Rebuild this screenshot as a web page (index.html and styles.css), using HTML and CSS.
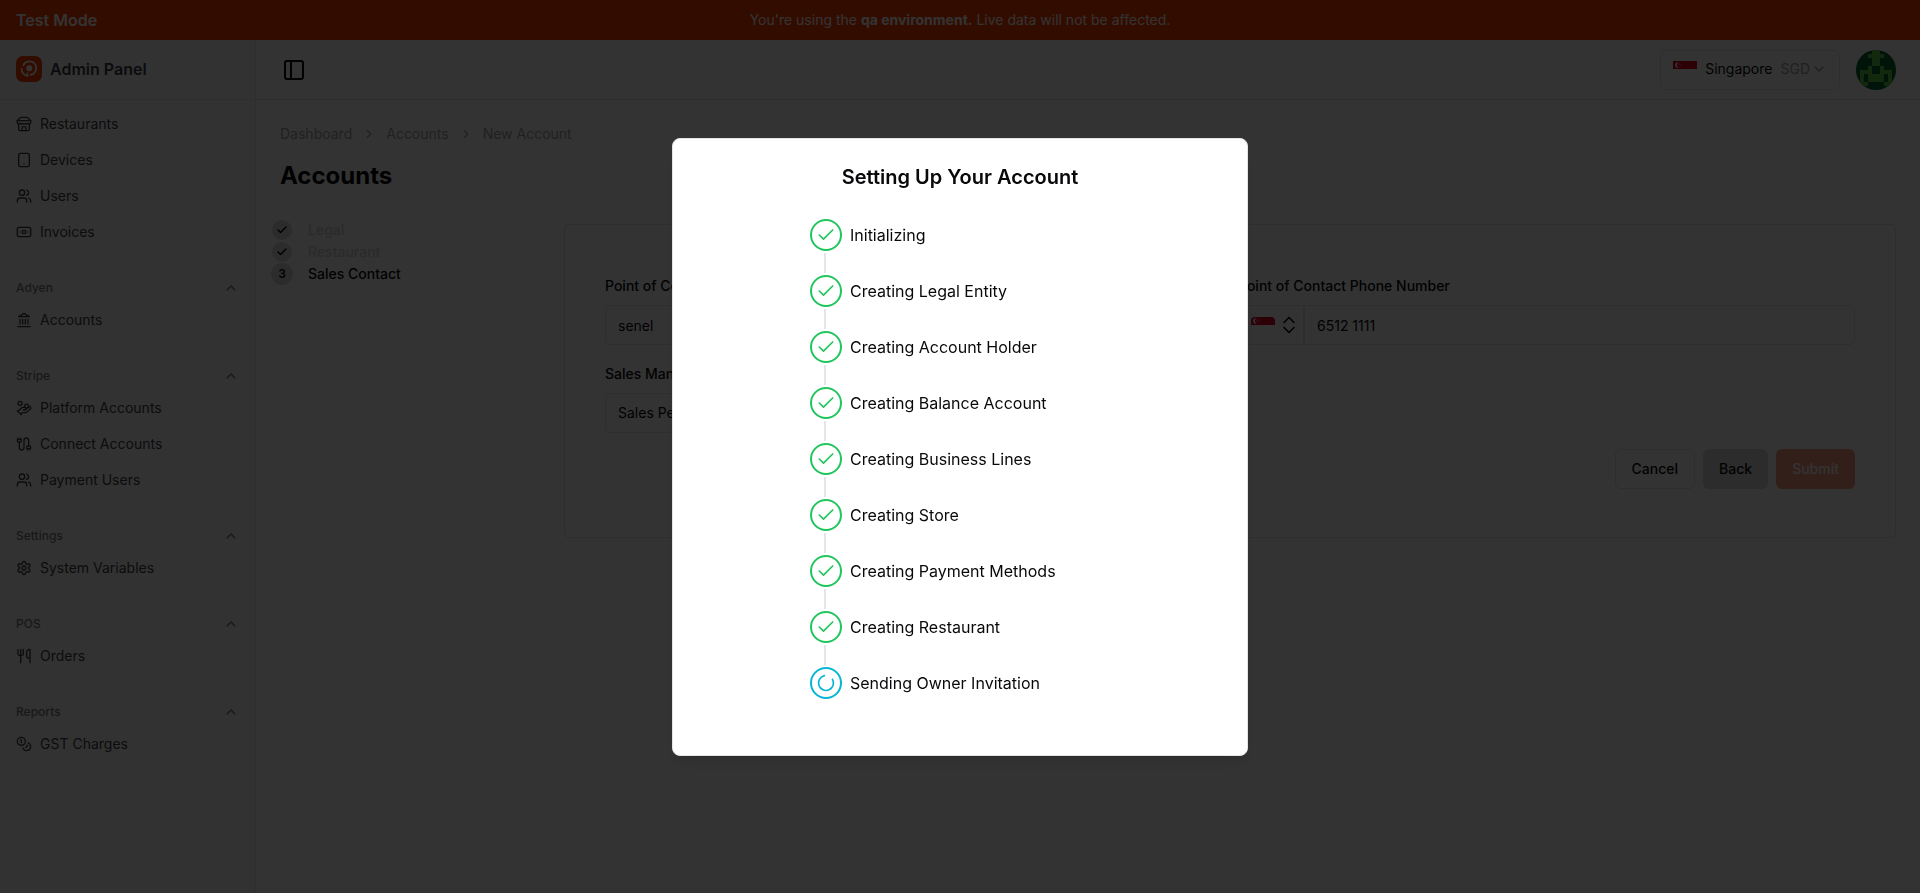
FILE: index.html
```html
<!DOCTYPE html>
<html lang="en">
<head>
<meta charset="utf-8">
<meta name="viewport" content="width=device-width, initial-scale=1">
<title>Admin Panel - New Account</title>
<link rel="stylesheet" href="styles.css">
</head>
<body>
<svg class="sprite" aria-hidden="true">
  <symbol id="i-store" viewBox="0 0 24 24"><path d="m2 7 4.41-4.41A2 2 0 0 1 7.83 2h8.34a2 2 0 0 1 1.42.59L22 7"/><path d="M4 12v8a2 2 0 0 0 2 2h12a2 2 0 0 0 2-2v-8"/><path d="M15 22v-4a2 2 0 0 0-2-2h-2a2 2 0 0 0-2 2v4"/><path d="M2 7h20"/><path d="M22 7v3a2 2 0 0 1-2 2a2.7 2.7 0 0 1-1.59-.63.7.7 0 0 0-.82 0A2.7 2.7 0 0 1 16 12a2.7 2.7 0 0 1-1.59-.63.7.7 0 0 0-.82 0A2.7 2.7 0 0 1 12 12a2.7 2.7 0 0 1-1.59-.63.7.7 0 0 0-.82 0A2.7 2.7 0 0 1 8 12a2.7 2.7 0 0 1-1.59-.63.7.7 0 0 0-.82 0A2.7 2.7 0 0 1 4 12a2 2 0 0 1-2-2V7"/></symbol>
  <symbol id="i-tablet" viewBox="0 0 24 24"><rect x="4" y="2" width="16" height="20" rx="2"/><path d="M12 18h.01"/></symbol>
  <symbol id="i-users" viewBox="0 0 24 24"><path d="M16 21v-2a4 4 0 0 0-4-4H6a4 4 0 0 0-4 4v2"/><circle cx="9" cy="7" r="4"/><path d="M22 21v-2a4 4 0 0 0-3-3.87"/><path d="M16 3.13a4 4 0 0 1 0 7.75"/></symbol>
  <symbol id="i-banknote" viewBox="0 0 24 24"><rect x="2" y="5" width="20" height="14" rx="2"/><circle cx="12" cy="12" r="2.5"/><path d="M6 12h.01M18 12h.01"/></symbol>
  <symbol id="i-landmark" viewBox="0 0 24 24"><path d="M3 22h18M6 18v-7M10 18v-7M14 18v-7M18 18v-7"/><path d="m12 2 8 5H4z"/></symbol>
  <symbol id="i-hand-coins" viewBox="0 0 24 24"><path d="M11 15h2a2 2 0 1 0 0-4h-3c-.6 0-1.1.2-1.4.6L3 17"/><path d="m7 21 1.6-1.4c.3-.4.8-.6 1.4-.6h4c1.1 0 2.1-.4 2.8-1.2l4.6-4.4a2 2 0 0 0-2.75-2.91l-4.2 3.9"/><path d="m2 16 6 6"/><circle cx="16" cy="9" r="2.9"/><circle cx="6" cy="5" r="3"/></symbol>
  <symbol id="i-cable" viewBox="0 0 24 24"><path d="M17 21v-2a1 1 0 0 1-1-1v-1a2 2 0 0 1 2-2h2a2 2 0 0 1 2 2v1a1 1 0 0 1-1 1v2"/><path d="M19 15V6.5a3.5 3.5 0 0 0-7 0v11a3.5 3.5 0 0 1-7 0V9"/><path d="M21 19h-4M3 5h4V3"/><path d="M7 5a1 1 0 0 1 1 1v1a2 2 0 0 1-2 2H4a2 2 0 0 1-2-2V6a1 1 0 0 1 1-1V3"/></symbol>
  <symbol id="i-settings" viewBox="0 0 24 24"><path d="M12.22 2h-.44a2 2 0 0 0-2 2v.18a2 2 0 0 1-1 1.73l-.43.25a2 2 0 0 1-2 0l-.15-.08a2 2 0 0 0-2.73.73l-.22.38a2 2 0 0 0 .73 2.73l.15.1a2 2 0 0 1 1 1.72v.51a2 2 0 0 1-1 1.74l-.15.09a2 2 0 0 0-.73 2.73l.22.38a2 2 0 0 0 2.73.73l.15-.08a2 2 0 0 1 2 0l.43.25a2 2 0 0 1 1 1.73V20a2 2 0 0 0 2 2h.44a2 2 0 0 0 2-2v-.18a2 2 0 0 1 1-1.73l.43-.25a2 2 0 0 1 2 0l.15.08a2 2 0 0 0 2.73-.73l.22-.39a2 2 0 0 0-.73-2.73l-.15-.08a2 2 0 0 1-1-1.74v-.5a2 2 0 0 1 1-1.74l.15-.09a2 2 0 0 0 .73-2.73l-.22-.38a2 2 0 0 0-2.73-.73l-.15.08a2 2 0 0 1-2 0l-.43-.25a2 2 0 0 1-1-1.73V4a2 2 0 0 0-2-2z"/><circle cx="12" cy="12" r="3"/></symbol>
  <symbol id="i-utensils" viewBox="0 0 24 24"><path d="M3 2v7c0 1.1.9 2 2 2h4a2 2 0 0 0 2-2V2"/><path d="M7 2v20"/><path d="M21 15V2a5 5 0 0 0-5 5v6c0 1.1.9 2 2 2h3Zm0 0v7"/></symbol>
  <symbol id="i-coins" viewBox="0 0 24 24"><circle cx="8" cy="8" r="6"/><path d="M18.09 10.37A6 6 0 1 1 10.34 18"/><path d="M7 6h1v4"/><path d="m16.71 13.88.7.71-2.82 2.82"/></symbol>
  <symbol id="i-up" viewBox="0 0 24 24"><path d="m18 15-6-6-6 6"/></symbol>
  <symbol id="i-down" viewBox="0 0 24 24"><path d="m6 9 6 6 6-6"/></symbol>
  <symbol id="i-right" viewBox="0 0 24 24"><path d="m9 18 6-6-6-6"/></symbol>
  <symbol id="i-updown" viewBox="0 0 24 24"><path d="m6 9 6-6 6 6M6 15l6 6 6-6"/></symbol>
  <symbol id="i-panel" viewBox="0 0 24 24"><rect x="3" y="3" width="18" height="18" rx="2"/><path d="M9 3v18"/></symbol>
  <symbol id="i-check" viewBox="0 0 24 24"><path d="M20 6 9 17l-5-5"/></symbol>
  <symbol id="i-loader" viewBox="0 0 24 24"><path transform="rotate(-30 12 12)" d="M21 12a9 9 0 1 1-6.219-8.56"/></symbol>
  <symbol id="i-flag" viewBox="0 0 24 16"><path fill="#fff" d="M0 0h24v16H0z"/><path fill="#df0029" d="M0 0h24v8H0z"/><path fill="#fff" d="M5.500 1.400a2.700 2.700 0 1 0 0 5.200 2.900 2.900 0 0 1 0-5.200z"/><g fill="#fff"><circle cx="6.900" cy="2.500" r=".45"/><circle cx="5.800" cy="3.500" r=".45"/><circle cx="8" cy="3.500" r=".45"/><circle cx="6.200" cy="4.900" r=".45"/><circle cx="7.600" cy="4.900" r=".45"/></g></symbol>
</svg>

<div class="app">
  <div class="banner">
    <strong class="banner-mode">Test Mode</strong>
    <p class="banner-text">You're using the <strong>qa environment.</strong> Live data will not be affected.</p>
  </div>

  <div class="shell">
    <aside class="sidebar">
      <div class="brand">
        <svg class="brand-logo" viewBox="0 0 26 26" aria-hidden="true"><rect width="26" height="26" rx="7" fill="#ff3c00"/><g fill="none" stroke="#fff" stroke-width="1.700" stroke-linecap="round"><path d="M7.300 9.300A6.800 6.800 0 1 1 14.500 18.900"/><path d="M5.600 12.800a7.600 7.600 0 0 0 5.800 7.200v-2.600"/></g><circle cx="13.300" cy="12.200" r="3" fill="#fff"/></svg>
        <span class="brand-name">Admin Panel</span>
      </div>
      <nav class="nav">
        <div class="nav-group">
          <a class="nav-item" href="#"><svg class="icon"><use href="#i-store"/></svg>Restaurants</a>
          <a class="nav-item" href="#"><svg class="icon"><use href="#i-tablet"/></svg>Devices</a>
          <a class="nav-item" href="#"><svg class="icon"><use href="#i-users"/></svg>Users</a>
          <a class="nav-item" href="#"><svg class="icon"><use href="#i-banknote"/></svg>Invoices</a>
        </div>
        <div class="nav-group">
          <button class="nav-label" type="button">Adyen<svg class="icon"><use href="#i-up"/></svg></button>
          <a class="nav-item" href="#"><svg class="icon"><use href="#i-landmark"/></svg>Accounts</a>
        </div>
        <div class="nav-group">
          <button class="nav-label" type="button">Stripe<svg class="icon"><use href="#i-up"/></svg></button>
          <a class="nav-item" href="#"><svg class="icon"><use href="#i-hand-coins"/></svg>Platform Accounts</a>
          <a class="nav-item" href="#"><svg class="icon"><use href="#i-cable"/></svg>Connect Accounts</a>
          <a class="nav-item" href="#"><svg class="icon"><use href="#i-users"/></svg>Payment Users</a>
        </div>
        <div class="nav-group">
          <button class="nav-label" type="button">Settings<svg class="icon"><use href="#i-up"/></svg></button>
          <a class="nav-item" href="#"><svg class="icon"><use href="#i-settings"/></svg>System Variables</a>
        </div>
        <div class="nav-group">
          <button class="nav-label" type="button">POS<svg class="icon"><use href="#i-up"/></svg></button>
          <a class="nav-item" href="#"><svg class="icon"><use href="#i-utensils"/></svg>Orders</a>
        </div>
        <div class="nav-group">
          <button class="nav-label" type="button">Reports<svg class="icon"><use href="#i-up"/></svg></button>
          <a class="nav-item" href="#"><svg class="icon"><use href="#i-coins"/></svg>GST Charges</a>
        </div>
      </nav>
    </aside>

    <div class="content">
      <header class="topbar">
        <button class="panel-toggle" type="button" aria-label="Toggle sidebar"><svg class="icon icon-lg"><use href="#i-panel"/></svg></button>
        <div class="topbar-end">
          <button class="country" type="button">
            <svg class="flag"><use href="#i-flag"/></svg>
            <span>Singapore</span>
            <span class="currency">SGD<svg class="icon"><use href="#i-down"/></svg></span>
          </button>
          <svg class="avatar" viewBox="0 0 10 10" role="img" aria-label="Profile" shape-rendering="crispEdges"><path fill="#00672e" d="M0 0h10v10H0z"/><path fill="#63c748" d="M4 0h2v1h1v1H6v2h1v1h2v4H7V8h1V6H7v2H3V6H2v2h1v1H1V5h2V4h1V2H3V1h1zM4 4h2v2H4z" fill-rule="evenodd"/></svg>
        </div>
      </header>

      <main class="page">
        <nav class="crumbs" aria-label="Breadcrumb">
          <a href="#">Dashboard</a>
          <svg class="icon icon-sm"><use href="#i-right"/></svg>
          <a href="#">Accounts</a>
          <svg class="icon icon-sm"><use href="#i-right"/></svg>
          <a href="#">New Account</a>
        </nav>
        <h1 class="title">Accounts</h1>

        <div class="columns">
          <ol class="steps">
            <li class="step step-done"><span class="dot"><svg class="icon icon-xs"><use href="#i-check"/></svg></span>Legal</li>
            <li class="step step-done"><span class="dot"><svg class="icon icon-xs"><use href="#i-check"/></svg></span>Restaurant</li>
            <li class="step"><span class="dot dot-current">3</span>Sales Contact</li>
          </ol>

          <form class="card">
            <div class="fields">
              <div class="field">
                <label for="poc-name">Point of Contact Name</label>
                <input class="control" id="poc-name" type="text" value="senel">
              </div>
              <div class="field">
                <label for="poc-phone">Point of Contact Phone Number</label>
                <div class="phone">
                  <button class="dial" type="button" aria-label="Country code"><svg class="flag flag-round"><use href="#i-flag"/></svg><svg class="icon icon-md"><use href="#i-updown"/></svg></button>
                  <input class="control phone-number" id="poc-phone" type="tel" value="6512 1111">
                </div>
              </div>
              <div class="field">
                <label for="manager">Sales Manager</label>
                <select class="control" id="manager"><option>Sales Person</option></select>
              </div>
            </div>
            <div class="actions">
              <button class="btn btn-outline" type="button">Cancel</button>
              <button class="btn btn-muted" type="button">Back</button>
              <button class="btn btn-primary" type="submit">Submit</button>
            </div>
          </form>
        </div>
      </main>
    </div>
  </div>
</div>

<div class="overlay">
  <section class="dialog" role="dialog" aria-modal="true" aria-labelledby="dialog-title">
    <h2 class="dialog-title" id="dialog-title">Setting Up Your Account</h2>
    <ol class="progress">
      <li class="task"><span class="ring"><svg class="icon icon-md"><use href="#i-check"/></svg></span>Initializing</li>
      <li class="task"><span class="ring"><svg class="icon icon-md"><use href="#i-check"/></svg></span>Creating Legal Entity</li>
      <li class="task"><span class="ring"><svg class="icon icon-md"><use href="#i-check"/></svg></span>Creating Account Holder</li>
      <li class="task"><span class="ring"><svg class="icon icon-md"><use href="#i-check"/></svg></span>Creating Balance Account</li>
      <li class="task"><span class="ring"><svg class="icon icon-md"><use href="#i-check"/></svg></span>Creating Business Lines</li>
      <li class="task"><span class="ring"><svg class="icon icon-md"><use href="#i-check"/></svg></span>Creating Store</li>
      <li class="task"><span class="ring"><svg class="icon icon-md"><use href="#i-check"/></svg></span>Creating Payment Methods</li>
      <li class="task"><span class="ring"><svg class="icon icon-md"><use href="#i-check"/></svg></span>Creating Restaurant</li>
      <li class="task task-active"><span class="ring"><svg class="icon icon-md"><use href="#i-loader"/></svg></span>Sending Owner Invitation</li>
    </ol>
  </section>
</div>
</body>
</html>
```
FILE: styles.css
```css
:root {
  --line: #e4e4e7;
  --ink: #09090b;
  --brand: #ff3c00;
}

*, *::before, *::after { box-sizing: border-box; }

body {
  margin: 0;
  background: #fff;
  color: var(--ink);
  font: 400 14px/20px Inter, "Liberation Sans", sans-serif;
}

h1, h2, p, ol { margin: 0; padding: 0; }
ol { list-style: none; }
a { color: inherit; text-decoration: none; }

button, input, select {
  margin: 0;
  color: inherit;
  font: inherit;
}

button {
  padding: 0;
  border: 0;
  background: none;
}

.sprite { display: none; }

.icon {
  display: block;
  flex: none;
  width: 16px;
  height: 16px;
  fill: none;
  stroke: currentColor;
  stroke-width: 2;
  stroke-linecap: round;
  stroke-linejoin: round;
}
.icon-xs { width: 12px; height: 12px; stroke-width: 3; }
.icon-sm { width: 14px; height: 14px; }
.icon-md { width: 20px; height: 20px; }
.icon-lg { width: 24px; height: 24px; }

.app {
  display: flex;
  flex-direction: column;
  min-height: 100vh;
}

/* Environment banner */
.banner {
  display: grid;
  grid-template-columns: 1fr auto 1fr;
  align-items: center;
  height: 40px;
  padding: 0 16px;
  background: var(--brand);
  color: #fff;
}
.banner-mode { font-size: 16px; font-weight: 600; }

.shell {
  display: flex;
  flex: 1;
}

/* Sidebar */
.sidebar {
  flex: none;
  width: 256px;
  border-right: 1px solid var(--line);
  background: #fafafa;
  color: #3f3f46;
}
.brand {
  display: flex;
  align-items: center;
  gap: 8px;
  height: 60px;
  padding: 0 16px 1px;
  border-bottom: 1px solid var(--line);
}
.brand-logo { width: 26px; height: 26px; }
.brand-name { font-size: 16px; font-weight: 600; }

.nav {
  display: flex;
  flex-direction: column;
  gap: 24px;
  padding: 6px 16px;
}
.nav-group { display: flex; flex-direction: column; }
.nav-item {
  display: flex;
  align-items: center;
  gap: 8px;
  height: 36px;
}
.nav-label {
  display: flex;
  align-items: center;
  justify-content: space-between;
  height: 28px;
  color: #7b7b80;
  font-size: 12px;
  font-weight: 500;
}

/* Top bar */
.content { flex: 1; min-width: 0; }
.topbar {
  display: flex;
  align-items: center;
  justify-content: space-between;
  height: 60px;
  padding: 0 24px 0 26px;
  border-bottom: 1px solid var(--line);
}
.topbar-end {
  display: flex;
  align-items: center;
  gap: 16px;
}
.country {
  display: flex;
  align-items: center;
  gap: 8px;
  height: 40px;
  padding: 0 12px 2px;
  border: 1px solid var(--line);
  border-radius: 6px;
}
.currency {
  display: flex;
  align-items: center;
  gap: 1px;
  color: #a1a1aa;
}
.flag { display: block; width: 24px; height: 16px; }
.flag-round { border-radius: 4px; }
.avatar { width: 40px; height: 40px; border-radius: 50%; }

/* Page */
.page { padding: 24px; }
.crumbs {
  display: flex;
  align-items: center;
  gap: 10px;
  color: #a1a1aa;
}
.title {
  margin-top: 16px;
  font-size: 24px;
  font-weight: 700;
  line-height: 32px;
}
.columns {
  display: grid;
  grid-template-columns: 260px 1fr;
  gap: 24px;
  align-items: start;
  margin-top: 27px;
}

.step {
  display: grid;
  grid-template-columns: 20px 1fr;
  align-items: center;
  gap: 16px;
  height: 22px;
  margin-left: -8px;
  font-weight: 500;
}
.step-done { color: #d0d0d4; }
.dot {
  display: flex;
  align-items: center;
  justify-content: center;
  justify-self: center;
  width: 20px;
  height: 20px;
  border-radius: 50%;
  background: #dcdcde;
  color: var(--ink);
}
.dot-current { width: 22px; height: 22px; font-size: 12px; font-weight: 600; }

/* Form card */
.card {
  margin-top: 5px;
  padding: 50px 40px 48px;
  border: 1px solid var(--line);
  border-radius: 4px;
}
.fields {
  display: grid;
  grid-template-columns: 1fr 1fr;
  gap: 18px 16px;
}
.field {
  display: flex;
  flex-direction: column;
  gap: 8px;
}
.field label { font-weight: 500; line-height: 22px; }
.control {
  width: 100%;
  height: 40px;
  padding: 0 12px;
  border: 1px solid var(--line);
  border-radius: 6px;
  background: #fff;
  appearance: none;
}
.phone { display: flex; }
.dial {
  display: flex;
  flex: none;
  align-items: center;
  gap: 4px;
  height: 40px;
  padding: 0 4px 0 12px;
  border: 1px solid var(--line);
  border-radius: 6px 0 0 6px;
}
.phone-number { border-radius: 0 6px 6px 0; }

.actions {
  display: flex;
  justify-content: flex-end;
  gap: 8px;
  margin-top: 16px;
}
.btn {
  height: 40px;
  padding: 0 16px;
  border-radius: 6px;
  font-weight: 500;
}
.btn-outline { border: 1px solid var(--line); }
.btn-muted { background: #dcdcde; }
.btn-primary { background: #ff9d80; color: #fff; }

/* Progress dialog */
.overlay {
  position: fixed;
  inset: 0;
  display: flex;
  align-items: center;
  justify-content: center;
  background: rgba(0, 0, 0, 0.8);
}
.dialog {
  width: 576px;
  padding: 24px 24px 56px;
  border: 1px solid var(--line);
  border-radius: 8px;
  background: #fff;
  box-shadow: 0 10px 15px -3px rgba(0, 0, 0, 0.1), 0 4px 6px -4px rgba(0, 0, 0, 0.1);
}
.dialog-title {
  font-size: 20px;
  font-weight: 600;
  line-height: 28px;
  text-align: center;
}
.progress {
  display: flex;
  flex-direction: column;
  gap: 24px;
  width: 300px;
  margin: 28px auto 0;
}
.task {
  position: relative;
  display: flex;
  align-items: center;
  gap: 8px;
  font-size: 16px;
  line-height: 24px;
}
.task:not(:last-child)::after {
  content: "";
  position: absolute;
  top: 34px;
  left: 14px;
  width: 2px;
  height: 20px;
  background: #e5e5e5;
}
.ring {
  display: flex;
  align-items: center;
  justify-content: center;
  width: 32px;
  height: 32px;
  border: 2px solid #22c55e;
  border-radius: 50%;
  color: #22c55e;
}
.task-active .ring { border-color: #06b6d4; color: #06b6d4; }
```
